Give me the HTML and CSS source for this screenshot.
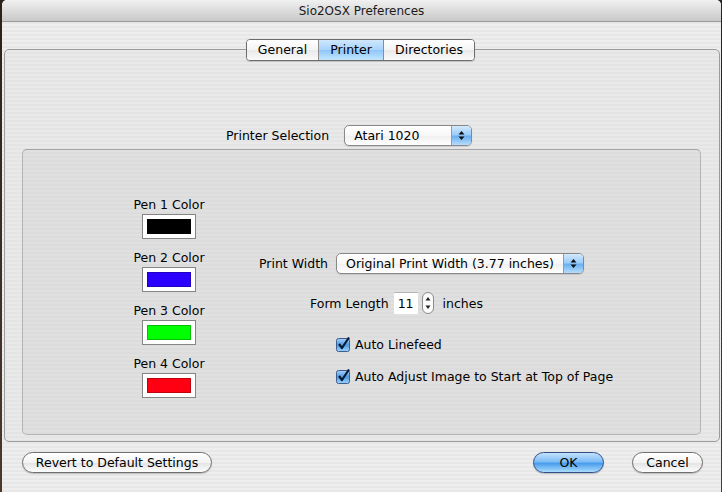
FILE: index.html
```html
<!DOCTYPE html>
<html>
<head>
<meta charset="utf-8">
<link rel="stylesheet" href="styles.css">
</head>
<body>
<div class="desk">
  <div class="window">
    <div class="titlebar">Sio2OSX Preferences</div>
    <div class="content">
      <div class="tabs">
        <span class="tab t1">General</span>
        <span class="tab t2 sel">Printer</span>
        <span class="tab t3">Directories</span>
      </div>
      <div class="tabbox">
        <div class="prsel">
          <span class="lbl">Printer Selection</span>
          <span class="popup w-atari"><span class="ptext">Atari 1020</span><span class="parrow"><svg width="7" height="11" viewBox="0 0 7 11"><path d="M3.5 1 L6.5 4.5 L0.5 4.5 Z M3.5 10 L6.5 6.5 L0.5 6.5 Z" fill="#111"/></svg></span></span>
        </div>
        <div class="group">
          <div class="pens">
            <div class="pen"><span class="plbl">Pen 1 Color</span><span class="well"><span class="sw c1"></span></span></div>
            <div class="pen"><span class="plbl">Pen 2 Color</span><span class="well"><span class="sw c2"></span></span></div>
            <div class="pen"><span class="plbl">Pen 3 Color</span><span class="well"><span class="sw c3"></span></span></div>
            <div class="pen"><span class="plbl">Pen 4 Color</span><span class="well"><span class="sw c4"></span></span></div>
          </div>
          <div class="opts">
            <div class="row r1">
              <span class="lbl">Print Width</span>
              <span class="popup w-print"><span class="ptext">Original Print Width (3.77 inches)</span><span class="parrow"><svg width="7" height="11" viewBox="0 0 7 11"><path d="M3.5 1 L6.5 4.5 L0.5 4.5 Z M3.5 10 L6.5 6.5 L0.5 6.5 Z" fill="#111"/></svg></span></span>
            </div>
            <div class="row r2">
              <span class="lbl">Form Length</span>
              <span class="field">11</span>
              <span class="stepper"><svg width="12" height="22" viewBox="0 0 12 22"><rect x="0.5" y="0.5" width="11" height="21" rx="5.5" fill="#fbfbfb" stroke="#8c8c8c"/><path d="M6 5 L8.5 8.5 L3.5 8.5 Z M6 17 L8.5 13.5 L3.5 13.5 Z" fill="#222"/></svg></span>
              <span class="lbl unit">inches</span>
            </div>
            <div class="row r3">
              <span class="cb"><svg width="15" height="15" viewBox="0 0 15 15"><defs><linearGradient id="g1" x1="0" y1="0" x2="0" y2="1"><stop offset="0" stop-color="#a9d1f7"/><stop offset="0.5" stop-color="#4b9be6"/><stop offset="1" stop-color="#9fd3fb"/></linearGradient></defs><rect x="0.5" y="1.5" width="13" height="13" rx="2" fill="url(#g1)" stroke="#3d5f8f"/><path d="M3 7 L6 11 L13 0.5" fill="none" stroke="#0b1a33" stroke-width="2.2" stroke-linejoin="round"/></svg></span>
              <span class="lbl">Auto Linefeed</span>
            </div>
            <div class="row r4">
              <span class="cb"><svg width="15" height="15" viewBox="0 0 15 15"><rect x="0.5" y="1.5" width="13" height="13" rx="2" fill="url(#g1)" stroke="#3d5f8f"/><path d="M3 7 L6 11 L13 0.5" fill="none" stroke="#0b1a33" stroke-width="2.2" stroke-linejoin="round"/></svg></span>
              <span class="lbl">Auto Adjust Image to Start at Top of Page</span>
            </div>
          </div>
        </div>
      </div>
      <div class="buttons">
        <span class="btn revert">Revert to Default Settings</span>
        <span class="spacer"></span>
        <span class="btn ok">OK</span>
        <span class="btn cancel">Cancel</span>
      </div>
    </div>
  </div>
</div>
</body>
</html>
```
FILE: styles.css
```css
html, body {
  margin: 0;
  padding: 0;
  width: 722px;
  height: 492px;
  overflow: hidden;
  background: #3b2c22;
  font-family: "DejaVu Sans", "Lucida Grande", sans-serif;
  font-size: 12.5px;
  color: #000;
}
.desk {
  width: 722px;
  height: 492px;
  padding-left: 2px;
  box-sizing: border-box;
  background: linear-gradient(180deg, #2a211c 0, #4a3a2e 100%);
}
.window {
  width: 719px;
  height: 492px;
  border-radius: 5px 5px 0 0;
  overflow: hidden;
  background: repeating-linear-gradient(180deg, #eeeeee 0, #eeeeee 2px, #e7e7e7 2px, #e7e7e7 4px);
}
.titlebar {
  height: 22px;
  box-sizing: border-box;
  border-bottom: 1px solid #9a9a9a;
  background: linear-gradient(180deg, #f1f1f1 0, #dcdcdc 50%, #c9c9c9 100%);
  text-align: center;
  line-height: 22px;
  font-size: 12px;
  color: #1a1a1a;
}
.content {
  padding-top: 17px;
}
.tabs {
  position: relative;
  z-index: 2;
  display: flex;
  margin-left: 244px;
  width: 229px;
  height: 22px;
  box-sizing: border-box;
  border: 1px solid #6c6c6c;
  border-radius: 4px;
  overflow: hidden;
  box-shadow: 0 1px 1px rgba(0,0,0,0.15);
}
.tab {
  height: 20px;
  line-height: 20px;
  text-align: center;
  background: linear-gradient(180deg, #ffffff 0, #f4f4f4 50%, #e9e9e9 51%, #fafafa 100%);
  border-right: 1px solid #8d8d8d;
}
.t1 { width: 71px; }
.t2 { width: 64px; }
.t3 { flex: 1; border-right: none; }
.tab.sel {
  background: linear-gradient(180deg, #cfe7fd 0, #a7d3fb 50%, #8ec6fa 51%, #c4e6fe 100%);
}
.tabbox {
  margin: -12px 1px 0 2px;
  height: 393px;
  box-sizing: border-box;
  border: 1px solid #9c9c9c;
  border-radius: 5px;
  padding-top: 75px;
  background: repeating-linear-gradient(180deg, #e9e9e9 0, #e9e9e9 2px, #e4e4e4 2px, #e4e4e4 4px);
}
.prsel {
  display: flex;
  align-items: center;
  height: 21px;
  margin-left: 221px;
}
.lbl { white-space: nowrap; }
.popup {
  display: flex;
  align-items: stretch;
  height: 21px;
  box-sizing: border-box;
  border: 1px solid #888;
  border-radius: 5px;
  overflow: hidden;
  background: linear-gradient(180deg, #ffffff 0, #f7f7f7 50%, #efefef 51%, #ffffff 100%);
  box-shadow: 0 1px 1px rgba(0,0,0,0.12);
}
.prsel .popup { margin-left: 15px; }
.w-atari { width: 128px; }
.w-print { width: 248px; margin-left: 8px; }
.ptext {
  flex: 1;
  line-height: 19px;
  padding-left: 9px;
  white-space: nowrap;
}
.parrow {
  width: 19px;
  display: flex;
  align-items: center;
  justify-content: center;
  border-left: 1px solid #7f9fc6;
  background: linear-gradient(180deg, #d2e9fd 0, #9ccdf8 45%, #6cb1f1 55%, #b6ddfd 100%);
}
.group {
  margin: 3px 18px 0 17px;
  height: 286px;
  box-sizing: border-box;
  border: 1px solid #b4b4b4;
  border-top-color: #a4a4a4;
  border-radius: 5px;
  background: repeating-linear-gradient(180deg, #e0e0e0 0, #e0e0e0 2px, #dcdcdc 2px, #dcdcdc 4px);
  display: flex;
  padding: 47px 0 0 96px;
}
.pens {
  width: 100px;
  display: flex;
  flex-direction: column;
  gap: 11px;
}
.pen {
  display: flex;
  flex-direction: column;
  align-items: center;
  gap: 2px;
}
.plbl {
  height: 15px;
  line-height: 15px;
  white-space: nowrap;
}
.well {
  width: 54px;
  height: 25px;
  box-sizing: border-box;
  border: 1px solid #858585;
  background: #fff;
  padding: 4px;
  display: flex;
}
.sw { flex: 1; border: 1px solid rgba(0,0,0,0.25); }
.c1 { background: #000; }
.c2 { background: #2c00ff; }
.c3 { background: #00ff00; }
.c4 { background: #ff0012; }
.opts {
  margin-left: 40px;
  padding-top: 56px;
  display: flex;
  flex-direction: column;
}
.row { display: flex; align-items: center; }
.r1 { height: 21px; }
.r2 { height: 22px; margin-top: 18px; margin-left: 51px; }
.r3 { height: 16px; margin-top: 22px; margin-left: 77px; }
.r4 { height: 16px; margin-top: 16px; margin-left: 77px; }
.field {
  width: 24px;
  height: 22px;
  box-sizing: border-box;
  margin-left: 5px;
  background: #fff;
  border-top: 1px solid #b5b5b5;
  line-height: 21px;
  text-align: center;
}
.stepper { margin-left: 4px; height: 22px; display: flex; }
.unit { margin-left: 9px; }
.cb { display: flex; margin-right: 4px; }
.buttons {
  display: flex;
  margin-top: 10px;
  padding: 0 18px 0 20px;
  height: 21px;
}
.spacer { flex: 1; }
.btn {
  height: 21px;
  box-sizing: border-box;
  border: 1px solid #6f6f6f;
  border-radius: 11px;
  line-height: 19px;
  text-align: center;
  background: linear-gradient(180deg, #ffffff 0, #f3f3f3 50%, #e3e3e3 51%, #fdfdfd 100%);
  box-shadow: 0 1px 1px rgba(0,0,0,0.2);
  white-space: nowrap;
}
.revert { width: 190px; }
.ok {
  width: 71px;
  border-color: #2f4f86;
  background: linear-gradient(180deg, #c3e2fd 0, #7fbdf5 45%, #4a9ded 55%, #a9dcfd 100%);
}
.cancel { width: 71px; margin-left: 28px; }
```
